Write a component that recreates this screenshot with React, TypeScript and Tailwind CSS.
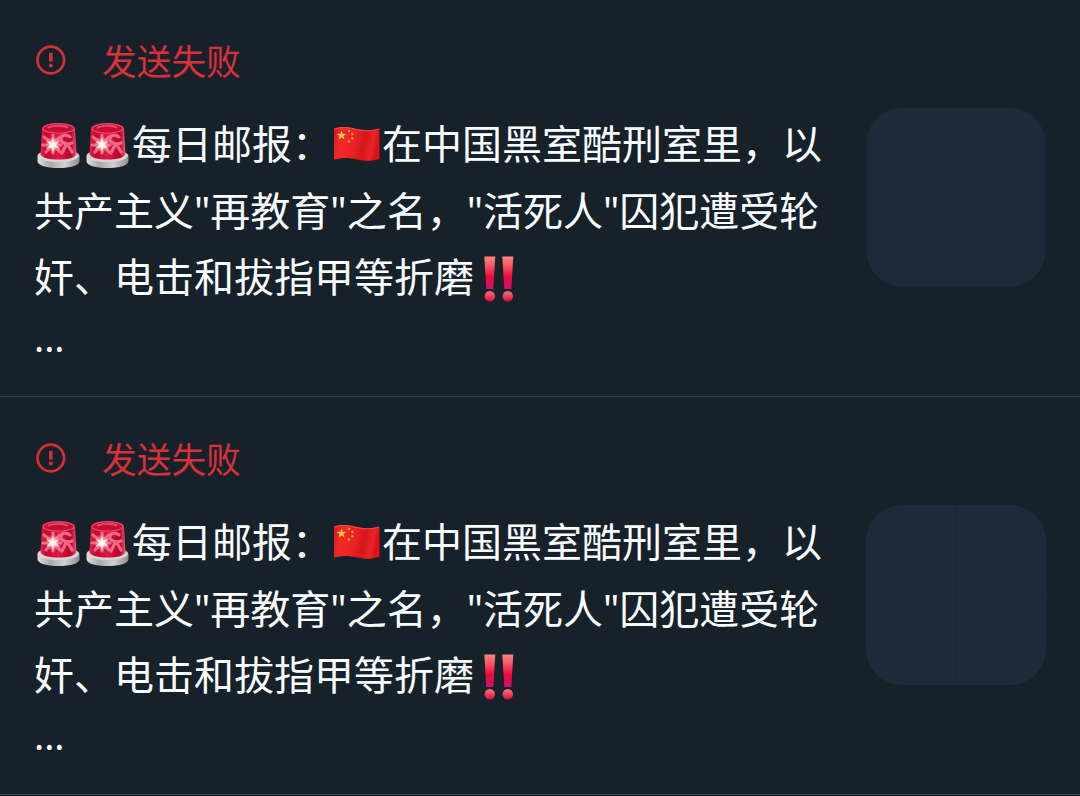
import React from 'react';

interface Draft {
  id: number;
  tiles: number;
}

const drafts: Draft[] = [
  { id: 1, tiles: 1 },
  { id: 2, tiles: 3 },
];

const ErrorIcon = () => (
  <svg className="mb-[4px] h-[30px] w-[30px] shrink-0" viewBox="0 0 30 30" fill="none">
    <circle cx="14.800" cy="15" r="13.300" stroke="#d22f39" strokeWidth="2.700" />
    <path d="M13 7.800h3.600v8.800H13z" fill="#d22f39" />
    <circle cx="14.800" cy="20.400" r="2" fill="#d22f39" />
  </svg>
);

const Siren = () => (
  <svg className="inline-block h-[49px] w-[49px] align-[-10px]" viewBox="0 0 49 49">
    <defs>
      <linearGradient id="sirenGlass" x1="0" x2="1" y1="0" y2="0">
        <stop offset="0" stopColor="#e5264f" />
        <stop offset=".15" stopColor="#c5062f" />
        <stop offset=".5" stopColor="#df1745" />
        <stop offset=".85" stopColor="#b9002b" />
        <stop offset="1" stopColor="#ef5b78" />
      </linearGradient>
      <linearGradient id="sirenBase" x1="0" x2="1" y1="0" y2="0">
        <stop offset="0" stopColor="#e2e0e0" />
        <stop offset=".3" stopColor="#aaa8a8" />
        <stop offset=".65" stopColor="#d2d0d0" />
        <stop offset="1" stopColor="#8e8c8e" />
      </linearGradient>
      <radialGradient id="sirenGlow">
        <stop offset="0" stopColor="#fff" />
        <stop offset=".35" stopColor="#ffc1c8" stopOpacity=".9" />
        <stop offset="1" stopColor="#ff6680" stopOpacity="0" />
      </radialGradient>
    </defs>
    <path d="M3.500 36.500C3.500 32 9 31 24.500 31s21 1 21 5.500v4.500c0 4.500-9 7-21 7s-21-2.500-21-7z" fill="url(#sirenBase)" />
    <path d="M4 36c2 4 10 6 20.500 6S43 40 45 36c-1-4-6-5-20.500-5S5 32 4 36z" fill="#d8d4d6" />
    <path d="M8 9c.5-4 7-6 16.500-6S40.500 5 41 9l1.500 25c-1.500 4-8 5.500-18 5.500S8 38 6.500 34z" fill="url(#sirenGlass)" />
    <ellipse cx="24.500" cy="8.500" rx="15.500" ry="4.700" fill="#c90b38" stroke="#f0506f" strokeWidth="1.100" />
    <path d="M14 8c4-2.500 15-3 20-.5" stroke="#f0718b" strokeWidth="2" fill="none" opacity=".65" />
    <g stroke="#f58496" strokeWidth="3.200" strokeLinecap="round" fill="none" opacity=".8">
      <path d="M10 17l9 7M19 15v18M9 25h18M12 32l7-8M26 32l-7-8M26 17l-7 7" />
      <path d="M36 17c-5-4-10-1-9 3 1 3 6 5 11 3M32 25l-4 8M34 25l4 7" />
    </g>
    <circle cx="19" cy="24.500" r="8.500" fill="url(#sirenGlow)" />
    <path d="M19 17l1.400 5.700 5.600-2-4.200 4.100 4.200 4-5.400-1.500L19 33l-1.700-5.700-5.300 1.500 4-4-4-4.100 5.400 2z" fill="#fff" opacity=".75" />
  </svg>
);

const Flag = () => (
  <svg className="inline-block h-[49px] w-[50px] align-[-10px]" viewBox="0 0 50 49">
    <defs>
      <linearGradient id="flagCloth" x1="0" x2="1" y1="0" y2=".15">
        <stop offset="0" stopColor="#d51820" />
        <stop offset=".2" stopColor="#f2292b" />
        <stop offset=".52" stopColor="#ec2025" />
        <stop offset=".72" stopColor="#d3161c" />
        <stop offset=".9" stopColor="#ec2427" />
        <stop offset="1" stopColor="#d91218" />
      </linearGradient>
    </defs>
    <path d="M2 8.500c8-2.500 15-1.500 23 .6 8 1.800 15 1.400 22.500-.6V39c-7.500 2.400-14.500 2.300-22.500.4-8-1.900-15-2.200-23 .4z" fill="url(#flagCloth)" />
    <path d="M2.500 9c8-2.500 15-1.500 22.500.6 8 1.800 15 1.400 22-.5" stroke="#ff6258" strokeWidth="1" fill="none" opacity=".65" />
    <path d="M9.500 10.500l1.200 3.300 3.500.1-2.700 2.200 1 3.400-3-2-3 2 1-3.400-2.700-2.200 3.500-.1z" fill="#ffcb3b" />
    <g fill="#f2a030">
      <circle cx="17" cy="11" r="1.300" />
      <circle cx="20.300" cy="14" r="1.300" />
      <circle cx="20.300" cy="18.300" r="1.300" />
      <circle cx="16.800" cy="21.500" r="1.300" />
    </g>
  </svg>
);

const DoubleBang = () => (
  <svg className="inline-block h-[49px] w-[49px] align-[-11px]" viewBox="0 0 49 49">
    <defs>
      <linearGradient id="bang" x1="0" x2="0" y1="0" y2="1">
        <stop offset="0" stopColor="#fb8581" />
        <stop offset=".3" stopColor="#f85262" />
        <stop offset=".62" stopColor="#ed0840" />
        <stop offset="1" stopColor="#c9146e" />
      </linearGradient>
      <linearGradient id="bangDot" x1="0" x2="0" y1="0" y2="1">
        <stop offset="0" stopColor="#fa777c" />
        <stop offset="1" stopColor="#e0093d" />
      </linearGradient>
    </defs>
    <path d="M10.300 2.500h11l-2 32.500h-7zM28.300 2.500h11l-2 32.500h-7z" fill="url(#bang)" />
    <circle cx="15.800" cy="42.300" r="5.200" fill="url(#bangDot)" />
    <circle cx="33.800" cy="42.300" r="5.200" fill="url(#bangDot)" />
  </svg>
);

const Thumbnail = ({ tiles }: { tiles: number }) => {
  if (tiles === 1) {
    return <div className="mt-[107px] h-[180px] w-[180px] shrink-0 rounded-[36px] border border-[#1a2531] bg-[#1e2a39]" />;
  }

  return (
    <div className="mt-[107px] grid h-[180px] w-[180px] shrink-0 grid-cols-2 grid-rows-2 gap-[2px] overflow-hidden rounded-[36px] bg-[#1c2836]">
      <div className="row-span-2 bg-[#1e2a39]" />
      <div className="bg-[#1e2a39]" />
      <div className="bg-[#1e2a39]" />
    </div>
  );
};

const DraftItem = ({ draft }: { draft: Draft }) => (
  <article className="h-[398px]">
    <div className="flex h-[396px] justify-between px-[34px]">
      <div className="whitespace-nowrap">
        {/* Status */}
        <div className="mt-[36px] flex h-[52px] items-center pl-[2px] text-[34.7px] leading-[52px] text-[#d9303a]">
          <ErrorIcon />
          <span className="ml-[36px]">发送失败</span>
        </div>

        {/* Post text */}
        <div className="mt-[23px] text-[40px] leading-[66.7px] text-[#fafdff]">
          <p className="h-[66.7px]"><Siren /><Siren />每日邮报：<Flag />在中国黑室酷刑室里，以</p>
          <p className="h-[66.7px]">共产主义"再教育"之名，"活死人"囚犯遭受轮</p>
          <p className="h-[66.7px]">奸、电击和拔指甲等折磨<DoubleBang /></p>
          <p className="text-[38px] leading-[52px]">...</p>
        </div>
      </div>
      <Thumbnail tiles={draft.tiles} />
    </div>
    <div className="h-px bg-[#37414d]" />
  </article>
);

const App = () => {
  return (
    <main className="h-[796px] w-[1080px] overflow-hidden bg-[#17212a] font-['Noto_Sans','Noto_Sans_CJK_SC',sans-serif]">
      {drafts.map((draft) => (
        <DraftItem key={draft.id} draft={draft} />
      ))}
    </main>
  );
};

export default App;
